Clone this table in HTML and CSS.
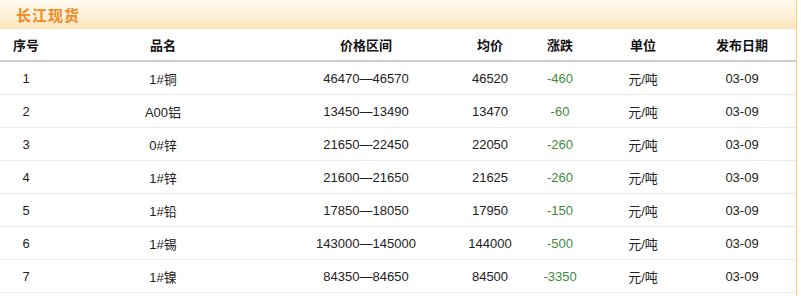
FILE: index.html
```html
<!DOCTYPE html>
<html lang="zh">
<head>
<meta charset="utf-8">
<title>长江现货</title>
<link rel="stylesheet" href="styles.css">
</head>
<body>
<div class="panel">
  <div class="title-bar"><span class="title">长江现货</span></div>
  <div class="table">
    <div class="row head">
      <div>序号</div><div>品名</div><div>价格区间</div><div>均价</div><div>涨跌</div><div>单位</div><div>发布日期</div>
    </div>
    <div class="row"><div>1</div><div>1#铜</div><div>46470—46570</div><div>46520</div><div class="chg">-460</div><div>元/吨</div><div>03-09</div></div>
    <div class="row"><div>2</div><div>A00铝</div><div>13450—13490</div><div>13470</div><div class="chg">-60</div><div>元/吨</div><div>03-09</div></div>
    <div class="row"><div>3</div><div>0#锌</div><div>21650—22450</div><div>22050</div><div class="chg">-260</div><div>元/吨</div><div>03-09</div></div>
    <div class="row"><div>4</div><div>1#锌</div><div>21600—21650</div><div>21625</div><div class="chg">-260</div><div>元/吨</div><div>03-09</div></div>
    <div class="row"><div>5</div><div>1#铅</div><div>17850—18050</div><div>17950</div><div class="chg">-150</div><div>元/吨</div><div>03-09</div></div>
    <div class="row"><div>6</div><div>1#锡</div><div>143000—145000</div><div>144000</div><div class="chg">-500</div><div>元/吨</div><div>03-09</div></div>
    <div class="row"><div>7</div><div>1#镍</div><div>84350—84650</div><div>84500</div><div class="chg">-3350</div><div>元/吨</div><div>03-09</div></div>
  </div>
</div>
</body>
</html>
```
FILE: styles.css
```css
html, body {
  margin: 0;
  padding: 0;
  background: #ffffff;
}
body {
  font-family: "Liberation Sans", "Noto Sans CJK SC", sans-serif;
  font-size: 13px;
  color: #222222;
}
.panel {
  width: 797px;
  border-right: 1px solid #f3d27a;
  box-sizing: border-box;
  height: 296px;
}
.title-bar {
  height: 29px;
  background: linear-gradient(to bottom, #fffaf0 0%, #fdf0d8 55%, #fbe4b9 100%);
  display: flex;
  align-items: center;
  padding-left: 16px;
}
.title {
  font-family: "Noto Sans CJK SC", sans-serif;
  font-weight: bold;
  font-size: 15px;
  color: #f0891c;
  letter-spacing: 1px;
}
.row {
  display: grid;
  grid-template-columns: 52px 222px 184px 64px 76px 90px 108px;
  height: 33px;
  align-items: center;
  border-bottom: 1px solid #ebebeb;
  box-sizing: border-box;
}
.row > div {
  text-align: center;
  white-space: nowrap;
}
.row.head {
  height: 33px;
  border-bottom: 2px solid #cccccc;
  font-family: "Noto Sans CJK SC", sans-serif;
  font-weight: bold;
  font-size: 13px;
  color: #111111;
}
.chg {
  color: #3f8a3a;
}
```
